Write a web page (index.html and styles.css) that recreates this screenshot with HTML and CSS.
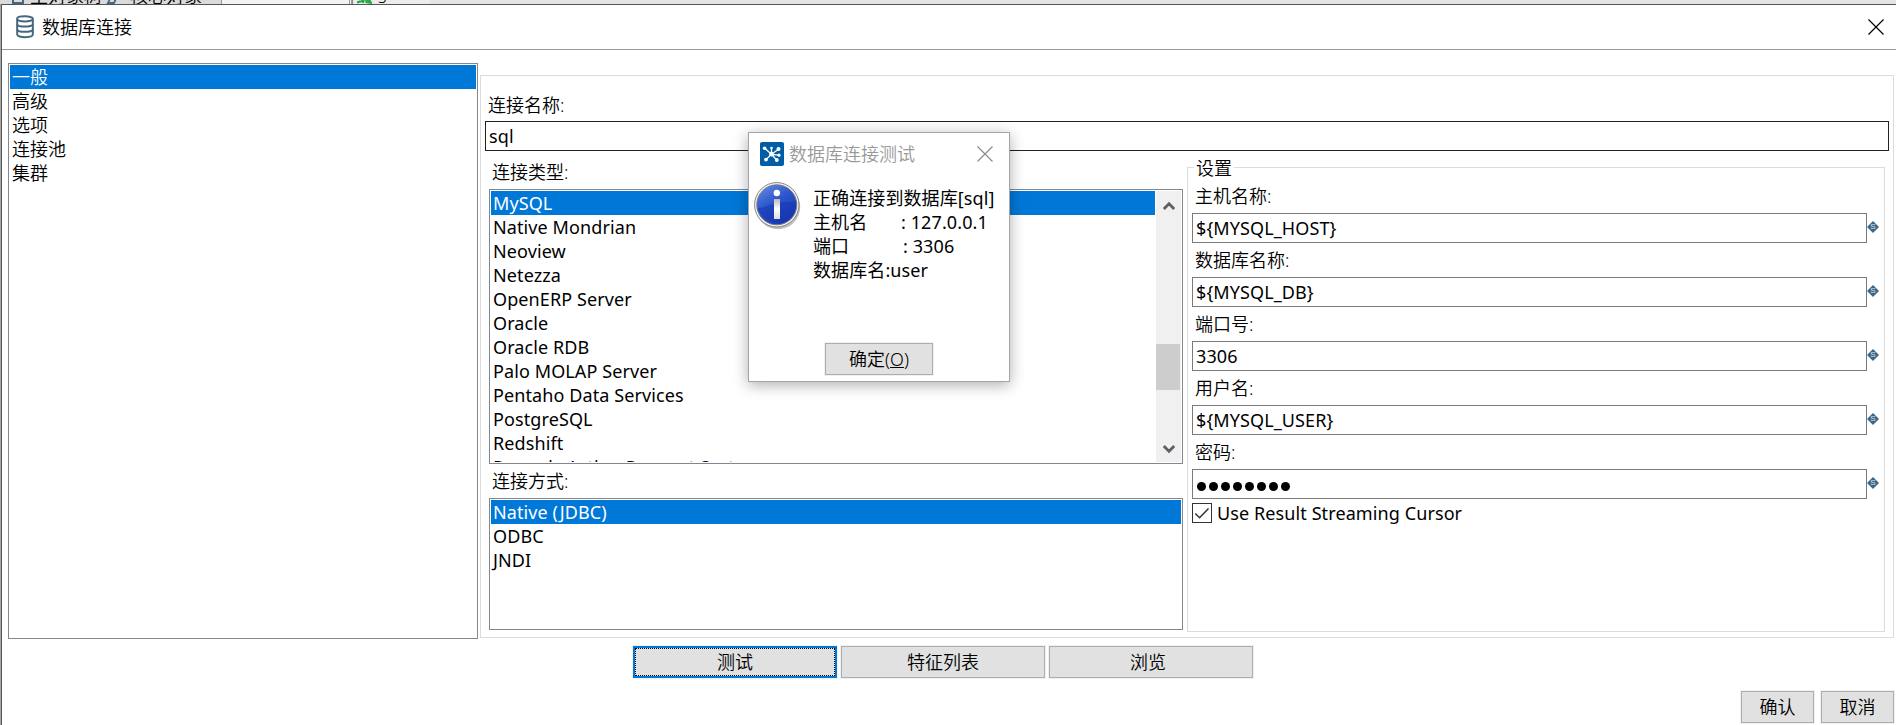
FILE: index.html
```html
<!DOCTYPE html>
<html lang="zh-CN">
<head>
  <meta charset="UTF-8">
  <meta name="viewport" content="width=device-width,initial-scale=1">
  <title>数据库连接</title>
  <link rel="stylesheet" href="styles.css">
</head>
<body>

  <!-- Janela principal por trás -->
  <div class="backdrop">
    <div class="tab tab-left">
      <i class="tab-icon"></i><span>主对象树</span>
      <i class="tab-icon second"></i><span>核心对象</span>
    </div>
    <div class="tab-gap"></div>
    <div class="tab tab-right">
      <svg class="tab-svg" width="16" height="6" viewBox="0 0 16 6" fill="none" stroke="#2aa846" stroke-width="2.2"><path d="M0 3.5L5 2L7 -1L6 4M9 -1L9.500 3L15 4M10 0L14 3"/></svg><span>s***</span>
    </div>
    <div class="tab-rest"></div>
  </div>

  <div class="window">
    <header class="titlebar">
      <svg class="db-icon" width="18" height="24" viewBox="0 0 18 24" fill="none" stroke="#45677f" stroke-width="2">
        <path d="M1.2 3.6C1.2 .6 16.8 .6 16.8 3.6V19.6C16.8 23 1.2 23 1.2 19.6Z"/>
        <path d="M1.2 4C1.2 7.2 16.8 7.2 16.8 4M1.2 9.2C1.2 12.4 16.8 12.4 16.8 9.2M1.2 14.4C1.2 17.6 16.8 17.6 16.8 14.4"/>
      </svg>
      <h1>数据库连接</h1>
      <svg class="close" width="16" height="16" viewBox="0 0 16 16" stroke="#000" stroke-width="1.2"><path d="M.5 .5L15.5 15.5M15.5 .5L.5 15.5"/></svg>
    </header>

    <main class="content">
      <ul class="list nav">
        <li class="selected">一般</li>
        <li>高级</li>
        <li>选项</li>
        <li>连接池</li>
        <li>集群</li>
      </ul>

      <section class="panel">
        <div class="name-row">
          <label>连接名称:</label>
          <div class="input dark">sql</div>
        </div>
        <div class="columns">
          <div class="types">
            <label>连接类型:</label>
            <div class="list type-list">
              <ul>
                <li class="selected">MySQL</li>
                <li>Native Mondrian</li>
                <li>Neoview</li>
                <li>Netezza</li>
                <li>OpenERP Server</li>
                <li>Oracle</li>
                <li>Oracle RDB</li>
                <li>Palo MOLAP Server</li>
                <li>Pentaho Data Services</li>
                <li>PostgreSQL</li>
                <li>Redshift</li>
                <li>Remedy Action Request System</li>
              </ul>
              <div class="scrollbar">
                <svg width="12" height="10" viewBox="0 0 12 10" fill="none" stroke="#606060" stroke-width="2.8"><path d="M.8 8L6 2.8L11.2 8"/></svg>
                <div class="thumb"></div>
                <svg width="12" height="10" viewBox="0 0 12 10" fill="none" stroke="#606060" stroke-width="2.8"><path d="M.8 2L6 7.2L11.2 2"/></svg>
              </div>
            </div>
            <label class="access-label">连接方式:</label>
            <ul class="list access-list">
              <li class="selected">Native (JDBC)</li>
              <li>ODBC</li>
              <li>JNDI</li>
            </ul>
          </div>

          <div class="settings">
            <div class="legend"><span>设置</span></div>
            <label>主机名称:</label>
            <div class="field"><div class="input">${MYSQL_HOST}</div><i class="var"><span>S</span></i></div>
            <label>数据库名称:</label>
            <div class="field"><div class="input">${MYSQL_DB}</div><i class="var"><span>S</span></i></div>
            <label>端口号:</label>
            <div class="field"><div class="input">3306</div><i class="var"><span>S</span></i></div>
            <label>用户名:</label>
            <div class="field"><div class="input">${MYSQL_USER}</div><i class="var"><span>S</span></i></div>
            <label>密码:</label>
            <div class="field">
              <div class="input password"><i></i><i></i><i></i><i></i><i></i><i></i><i></i><i></i></div>
              <i class="var"><span>S</span></i>
            </div>
            <div class="check">
              <svg width="20" height="20" viewBox="0 0 20 20" fill="none"><rect x=".5" y=".5" width="19" height="19" stroke="#333"/><path d="M3.3 10.5L7.6 14.7L16.5 5.5" stroke="#333" stroke-width="1.5"/></svg>
              <span>Use Result Streaming Cursor</span>
            </div>
          </div>
        </div>
      </section>
    </main>

    <div class="actions">
      <button class="btn focused">测试</button>
      <button class="btn">特征列表</button>
      <button class="btn browse">浏览</button>
    </div>
    <footer class="footer">
      <button class="btn">确认</button>
      <button class="btn">取消</button>
    </footer>
  </div>

  <!-- Mensagem do teste -->
  <div class="modal">
    <div class="modal-title">
      <svg width="24" height="24" viewBox="0 0 24 24">
        <rect width="24" height="24" rx="2" fill="#005da6"/>
        <path d="M11.5 12.3L4.5 6M11.5 12.3L11.5 5.5M11.5 12.3L18.5 7.2M11.5 12.3L18.8 13.2M11.5 12.3L16.7 18M11.5 12.3L6 17.6" stroke="#fff" stroke-width="1.3"/>
        <g fill="#fff"><circle cx="11.5" cy="12.2" r="2.4"/><circle cx="4.6" cy="6.2" r="1.8"/><circle cx="11.5" cy="6" r="1.3"/><circle cx="18.5" cy="7" r="2"/><circle cx="19" cy="13.2" r="1.6"/><circle cx="16.8" cy="18" r="1.9"/><circle cx="6" cy="17.6" r="1.9"/></g>
      </svg>
      <span>数据库连接测试</span>
      <svg class="close" width="16" height="16" viewBox="0 0 16 16" stroke="#888" stroke-width="1.1"><path d="M.5 .5L15.5 15.5M15.5 .5L.5 15.5"/></svg>
    </div>
    <div class="modal-body">
      <svg class="info" width="48" height="48" viewBox="0 0 48 48">
        <defs>
          <linearGradient id="blue" x1="0" y1="0" x2="0.6" y2="1"><stop offset="0" stop-color="#6a90ea"/><stop offset=".5" stop-color="#2d56ca"/><stop offset="1" stop-color="#1837b0"/></linearGradient>
          <linearGradient id="stem" x1="0" y1="0" x2="0" y2="1"><stop offset="0" stop-color="#bbb"/><stop offset=".5" stop-color="#fff"/><stop offset="1" stop-color="#ddd"/></linearGradient>
        </defs>
        <circle cx="24" cy="25" r="22.2" fill="#000" opacity=".25"/>
        <circle cx="22.8" cy="22.8" r="22.2" fill="#f4f4f4" stroke="#858585" stroke-width="1"/>
        <circle cx="22.8" cy="22.8" r="20" fill="url(#blue)" stroke="#77777f" stroke-width="1"/>
        <path d="M3.5 26C14 26 19 18 42.5 20A20 20 0 0 1 3.5 26Z" fill="#1536b4" opacity=".55"/>
        <circle cx="22.8" cy="11" r="3.2" fill="#fff"/>
        <rect x="20" y="17" width="6" height="20" fill="url(#stem)"/>
      </svg>
      <div class="message">
        <p>正确连接到数据库[sql]</p>
        <p><span class="key">主机名</span>: 127.0.0.1</p>
        <p><span class="key port">端口</span>: 3306</p>
        <p>数据库名:user</p>
      </div>
    </div>
    <button class="btn">确定(<u>O</u>)</button>
  </div>

</body>
</html>
```

FILE: styles.css
```css
* { margin:0; padding:0; box-sizing:border-box; }
body {
  width:1896px; height:725px;
  font-family:"Noto Sans","Noto Sans CJK SC",sans-serif;
  font-size:18px; line-height:24px; font-weight:350;
  color:#000; background:#a8a8a8;
  overflow:hidden;
}
ul { list-style:none; }
svg { display:block; flex:none; }
label { display:block; white-space:nowrap; }

/* Abas cortadas no topo */
.backdrop {
  height:4px; overflow:hidden;
  display:flex; align-items:flex-end;
  background:#e4e4e4;
}
.tab { display:flex; align-items:flex-end; height:24px; flex:none; }
.tab span { line-height:24px; height:24px; margin-bottom:-4px; }
.tab-left { width:222px; padding-left:12px; border-right:1px solid #999; background:#dadada; }
.tab-right { width:78px; padding-left:4px; border-left:1px solid #888; background:#ececec; }
.tab-gap { width:130px; height:4px; background:#f3f3f3; border-right:3px double #999; }
.tab-rest { flex:1; height:4px; background:#e4e4e4; }
.tab-icon { width:12px; height:15px; margin-right:6px; border:2px solid #45677f; flex:none; }
.tab-icon.second { width:8px; margin:0 12px 0 8px; transform:skewX(-25deg); }
.tab-svg { margin-right:5px; margin-bottom:-1px; }

/* Janela */
.window {
  height:721px; margin-left:1px;
  border-top:1px solid #555; border-left:1px solid #555;
  background:#fff;
  display:flex; flex-direction:column;
}
.titlebar {
  height:45px; flex:none;
  display:flex; align-items:center;
  padding:0 12px 0 14px;
  border-bottom:1px solid #999;
}
.titlebar h1 { font-size:18px; font-weight:inherit; margin-left:8px; }
.close { margin-left:auto; }
.content { display:flex; height:576px; margin:13px 2px 0 6px; flex:none; }

/* Listas */
.list { border:1px solid #828790; padding:1px; overflow:hidden; }
.list li { height:24px; padding-left:2px; white-space:nowrap; }
.list .selected { background:#0078d7; color:#fff; }
.nav { width:470px; height:576px; flex:none; }
.type-list, .access-list, .input, .check, .message { font-weight:400; letter-spacing:.1px; }

.panel {
  flex:1; margin:12px 0 1px 2px; padding:17px 4px 0;
  border:1px solid #dcdcdc;
}
.name-row label { padding-left:3px; }
.input {
  height:30px; padding:2px 3px; border:1px solid #7a7a7a;
  flex:1; white-space:nowrap;
}
.input.dark { border-color:#222; margin-top:4px; }
.columns { display:flex; padding-left:4px; }
.types { width:694px; padding-top:9px; flex:none; }
.types label { padding-left:3px; }
.type-list { display:flex; height:275px; margin-top:5px; }
.type-list ul { flex:1; overflow:hidden; margin-right:1px; }
.scrollbar {
  width:25px; background:#f0f0f0;
  display:flex; flex-direction:column; align-items:center;
  padding:10px 0 8px;
}
.thumb { width:24px; height:46px; background:#cdcdcd; margin:133px 1px 0 0; }
.scrollbar svg:last-child { margin-top:auto; }
.access-label { margin-top:5px; }
.access-list { height:132px; margin-top:5px; }

/* Grupo de propriedades */
.settings {
  width:698px; height:465px; flex:none;
  margin:16px 0 0 4px; padding-left:4px;
  border:1px solid #dcdcdc;
}
.legend { height:15px; }
.legend span { display:inline-block; background:#fff; padding:0 2px; margin-left:2px; position:relative; top:-12px; }
.settings label { height:30px; padding:1px 0 0 3px; }
.field { display:flex; height:30px; margin-bottom:4px; width:687px; }
.var {
  width:12px; height:12px; margin-top:8px; flex:none;
  background:#3d6788; clip-path:polygon(50% 0,100% 50%,50% 100%,0 50%);
  color:#dde6ec; font:400 8px/12px "Liberation Sans",sans-serif; text-align:center;
}
.password { display:flex; align-items:center; gap:3px; padding-top:6px; padding-left:4px; }
.password i { width:9px; height:9px; border-radius:50%; background:#000; }
.check { display:flex; align-items:center; gap:5px; height:20px; }

/* Botões */
.btn {
  height:32px; border:1px solid #adadad; background:#e1e1e1;
  outline:1px solid #f0f0f0;
  font:inherit; color:#000;
}
.actions { display:flex; gap:4px; padding-left:631px; margin-top:7px; }
.actions .btn { width:204px; }
.actions .browse { padding-right:6px; }
.btn.focused { border:2px solid #0078d7; position:relative; }
.btn.focused::after { content:""; position:absolute; inset:0; border:1px dotted #000; }
.footer { display:flex; justify-content:flex-end; gap:7px; padding-right:2px; margin-top:13px; }
.footer .btn { width:73px; }

/* Caixa de mensagem */
.modal {
  position:absolute; left:748px; top:132px;
  width:262px; height:250px;
  background:#fff; border:1px solid #a5a5a5;
  box-shadow:0 3px 14px rgba(0,0,0,.32);
}
.modal-title { display:flex; align-items:center; height:42px; padding:0 16px 0 11px; color:#999; }
.modal-title span { margin-left:5px; }
.modal-body { display:flex; padding:7px 0 0 5px; }
.message { margin:4px 0 0 11px; white-space:nowrap; }
.key { display:inline-block; width:88px; }
.key.port { width:90px; }
.modal > .btn { display:block; width:108px; margin:61px 0 0 76px; }
```
